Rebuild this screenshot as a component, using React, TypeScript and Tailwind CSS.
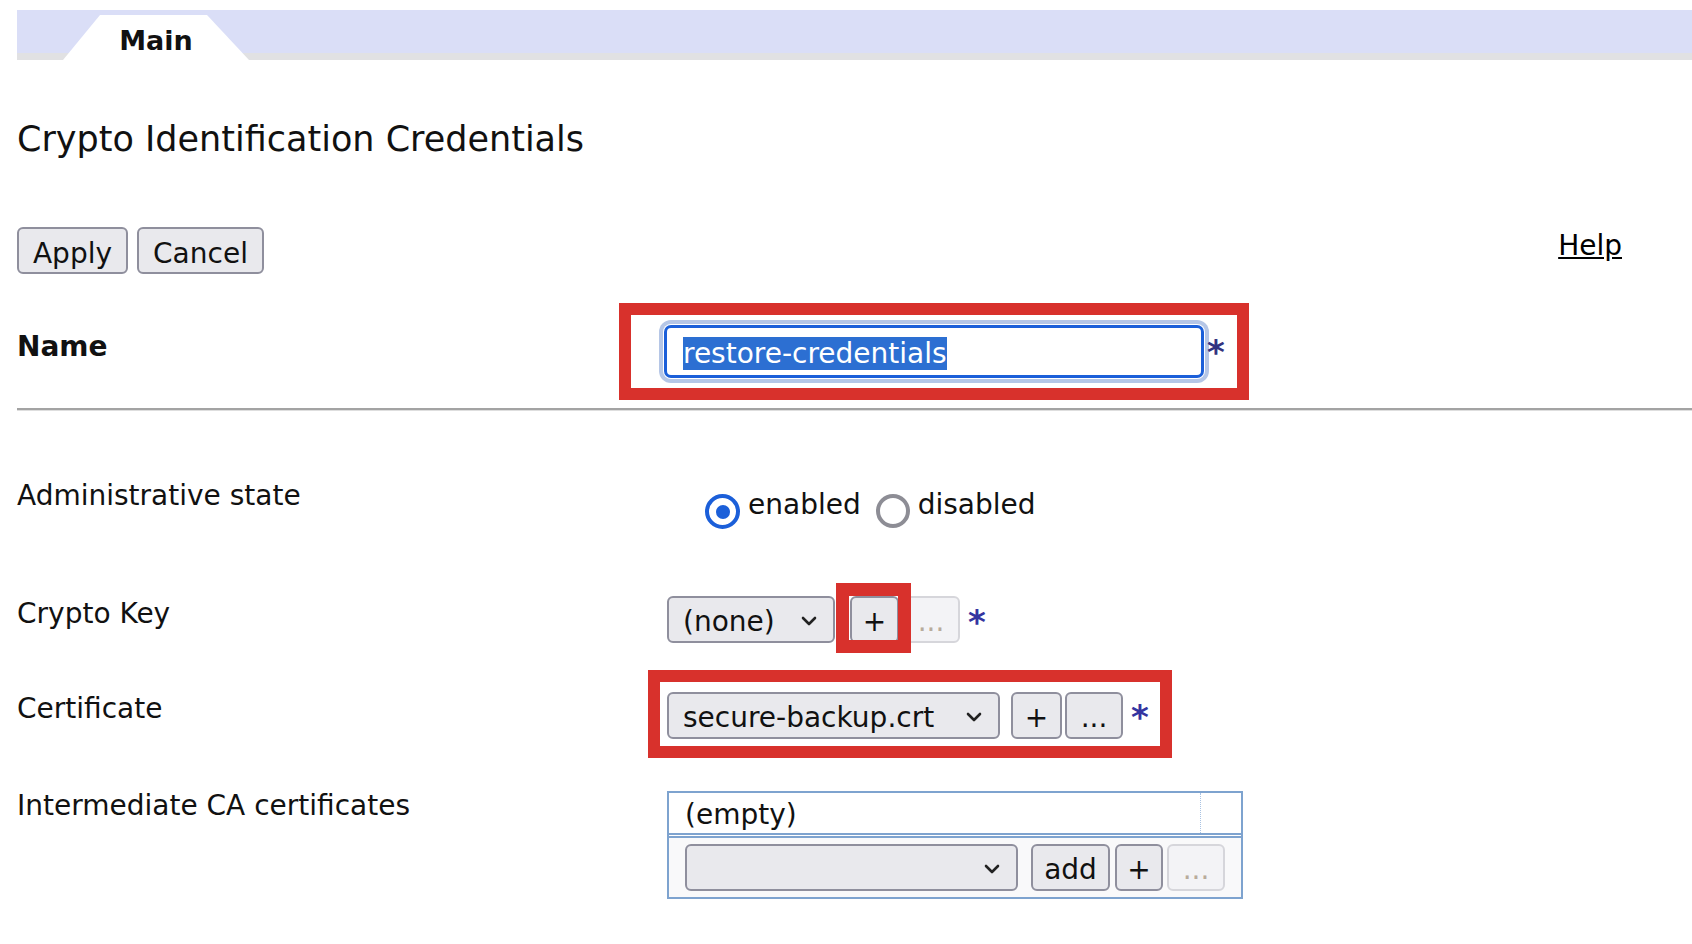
import React from "react";

const Chevron = () => (
  <svg width="16" height="10" viewBox="0 0 16 10" fill="none" className="shrink-0">
    <polyline points="2,2 8,8 14,2" stroke="#222" strokeWidth="2.6" strokeLinecap="round" strokeLinejoin="round" />
  </svg>
);

function Select({ text, className }: { text: string; className: string }) {
  return (
    <div
      className={
        "h-[47px] rounded-[6px] border-2 border-[#8f8f9d] bg-[#e9e9ed] flex items-center justify-between pl-[14px] pr-[16px] pt-[3px] text-[28px] leading-[33px] whitespace-nowrap " +
        className
      }
    >
      <span>{text}</span>
      <Chevron />
    </div>
  );
}

function SmallButton({ label, className, disabled }: { label: string; className: string; disabled?: boolean }) {
  return (
    <div
      className={
        "h-[47px] rounded-[6px] border-2 flex items-center justify-center pt-[3px] text-[28px] leading-[33px] " +
        (disabled ? "border-[#d6d6db] bg-[#f3f3f6] text-[#b8ab9c] " : "border-[#8f8f9d] bg-[#e9e9ed] text-[#111] ") +
        className
      }
    >
      {label}
    </div>
  );
}

const Star = ({ className }: { className: string }) => (
  <span className={"text-[34px] leading-[34px] font-bold text-[#3434a0] " + className}>*</span>
);

export default function App() {
  return (
    <div className="w-full min-h-screen bg-white overflow-hidden font-['DejaVu_Sans',sans-serif] text-[#111]">
      {/* Tab bar */}
      <div className="ml-[17px] mt-[10px] h-[50px] flex items-end bg-[linear-gradient(to_bottom,#dadef7_43px,#e1e1e3_43px)]">
        <div className="ml-[46px] w-[186px] h-[45px] bg-white [clip-path:polygon(37px_0,144px_0,186px_100%,0_100%)] text-center pt-[12px] text-[27px] leading-[27px] font-bold">
          Main
        </div>
      </div>

      {/* Title */}
      <h1 className="mt-[59px] ml-[17px] text-[35px] leading-[40px] font-normal">Crypto Identification Credentials</h1>

      {/* Buttons */}
      <div className="mt-[68px] pl-[17px] pr-[70px] flex justify-between items-start h-[47px]">
        <div className="flex gap-[9px]">
          <div className="w-[111px] h-[47px] rounded-[6px] border-2 border-[#8f8f9d] bg-[#e9e9ed] flex items-center justify-center pt-[6px] text-[28px] leading-[33px]">
            Apply
          </div>
          <div className="w-[127px] h-[47px] rounded-[6px] border-2 border-[#8f8f9d] bg-[#e9e9ed] flex items-center justify-center pt-[6px] text-[28px] leading-[33px]">
            Cancel
          </div>
        </div>
        <a className="mt-[2px] text-[28px] leading-[33px] underline text-black">Help</a>
      </div>

      {/* Name */}
      <div className="mt-[51px] pl-[17px] flex items-start h-[53px]">
        <div className="w-[650px] pt-[5px] font-bold text-[28px] leading-[33px]">Name</div>
        <div className="relative flex items-start ml-[-3px]">
          <div className="w-[540px] h-[53px] border-[3px] border-[#1b5fd9] rounded-[7px] shadow-[0_0_0_1px_#fff,0_0_0_5px_#b5c6e6] flex items-center pl-[16px] pt-[4px] bg-white">
            <span className="bg-[#2c6fd2] text-white text-[28px] leading-[33px]">restore-credentials</span>
          </div>
          <span className="ml-[3px] mt-[10px] text-[34px] leading-[34px] font-bold text-[#333380]">*</span>
          <div className="absolute left-[-45px] top-[-22px] w-[630px] h-[97px] border-[12px] border-[#d8312c] pointer-events-none" />
        </div>
      </div>

      {/* Rule */}
      <div className="mt-[30px] ml-[17px] border-t-2 border-t-[#a3a3a3] border-b border-b-[#dedede]" />

      {/* Administrative state */}
      <div className="mt-[68px] pl-[17px] flex items-start h-[116px]">
        <div className="w-[650px] text-[28px] leading-[33px]">Administrative state</div>
        <div className="ml-[38px] pt-[9px] flex items-start text-[28px] leading-[33px]">
          <div className="mt-[6px] w-[35px] h-[35px] rounded-full border-[4px] border-[#1b5fd9] flex items-center justify-center">
            <div className="w-[14px] h-[14px] rounded-full bg-[#1b5fd9]" />
          </div>
          <span className="ml-[8px]">enabled</span>
          <div className="ml-[15px] mt-[6px] w-[34px] h-[34px] rounded-full border-[4px] border-[#8d8d95]" />
          <span className="ml-[8px]">disabled</span>
        </div>
      </div>

      {/* Crypto Key */}
      <div className="pl-[17px] flex items-start h-[97px]">
        <div className="w-[650px] pt-[2px] text-[28px] leading-[33px]">Crypto Key</div>
        <div className="flex items-start mt-[1px]">
          <Select text="(none)" className="w-[168px]" />
          <div className="relative ml-[15px]">
            <SmallButton label="+" className="w-[49px]" />
            <div className="absolute left-[-14px] top-[-13px] w-[75px] h-[70px] border-[13px] border-[#d8312c] pointer-events-none" />
          </div>
          <SmallButton label="..." className="ml-[3px] w-[58px]" disabled />
          <Star className="ml-[8px] mt-[9px]" />
        </div>
      </div>

      {/* Certificate */}
      <div className="pl-[17px] flex items-start h-[97px]">
        <div className="w-[650px] text-[28px] leading-[33px]">Certificate</div>
        <div className="relative flex items-start">
          <Select text="secure-backup.crt" className="w-[333px]" />
          <SmallButton label="+" className="ml-[11px] w-[51px]" />
          <SmallButton label="..." className="ml-[3px] w-[58px]" />
          <Star className="ml-[8px] mt-[8px]" />
          <div className="absolute left-[-19px] top-[-22px] w-[524px] h-[88px] border-[12px] border-[#d8312c] pointer-events-none" />
        </div>
      </div>

      {/* Intermediate CA certificates */}
      <div className="pl-[17px] flex items-start">
        <div className="w-[650px] text-[28px] leading-[33px]">Intermediate CA certificates</div>
        <div className="mt-[2px] w-[576px] border-2 border-[#7ea3cf]">
          <div className="h-[42px] flex border-b-2 border-b-[#7ea3cf]">
            <div className="flex-1 flex items-center pl-[16px] pt-[2px] text-[28px] leading-[33px]">(empty)</div>
            <div className="w-[41px] border-l border-dotted border-l-[#a9c3e3]" />
          </div>
          <div className="mt-[1px] border-t-2 border-t-[#7ea3cf] bg-[#f9f9fa] flex items-center pl-[16px] py-[6px]">
            <Select text="" className="w-[333px]" />
            <SmallButton label="add" className="ml-[13px] w-[79px]" />
            <SmallButton label="+" className="ml-[5px] w-[48px]" />
            <SmallButton label="..." className="ml-[4px] w-[58px]" disabled />
          </div>
        </div>
      </div>
    </div>
  );
}
